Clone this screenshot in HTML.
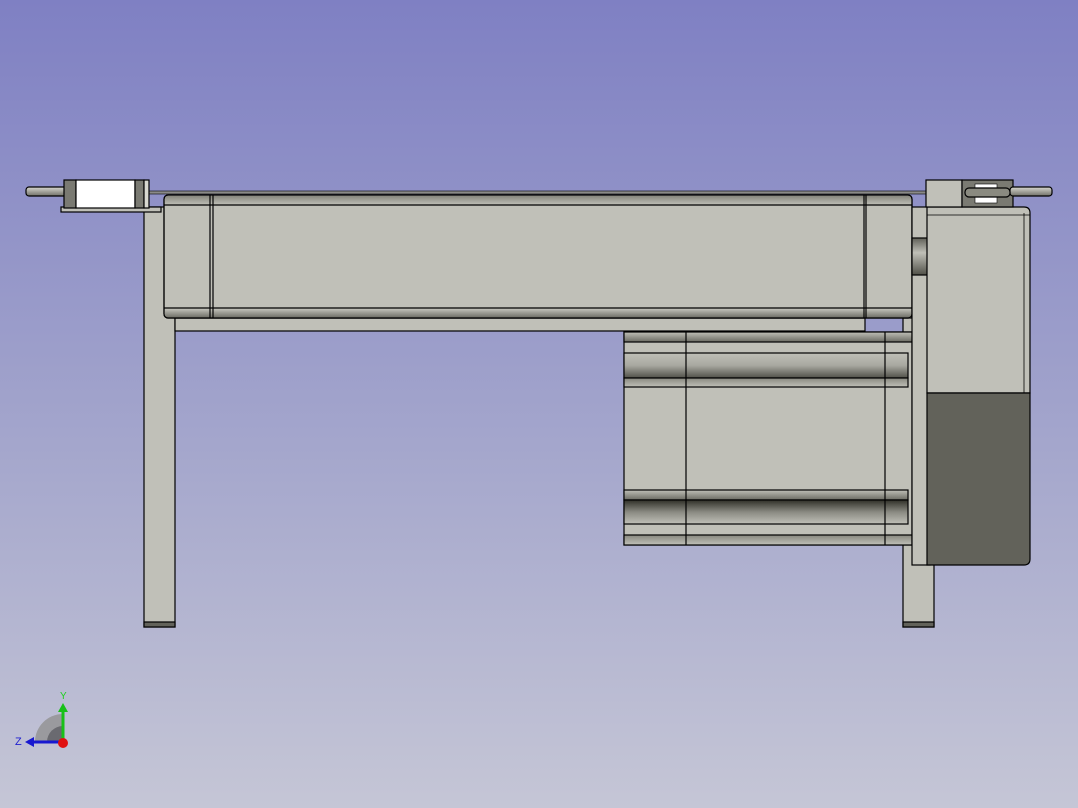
<!DOCTYPE html>
<html><head><meta charset="utf-8"><style>
html,body{margin:0;padding:0;width:1078px;height:808px;overflow:hidden}
body{background:linear-gradient(#7f80c3,#a4a6cc 55%,#c5c6d6);font-family:"Liberation Sans",sans-serif}
svg{position:absolute;left:0;top:0}
</style></head><body>
<svg width="1078" height="808" viewBox="0 0 1078 808">
<defs>
<linearGradient id="cyl" x1="0" y1="0" x2="0" y2="1"><stop offset="0" stop-color="#c0c0b8"/><stop offset=".5" stop-color="#a8a8a0"/><stop offset="1" stop-color="#505048"/></linearGradient>
<linearGradient id="cylr" x1="0" y1="0" x2="0" y2="1"><stop offset="0" stop-color="#303028"/><stop offset=".5" stop-color="#8a8a82"/><stop offset="1" stop-color="#c0c0b8"/></linearGradient>
<linearGradient id="topb" x1="0" y1="0" x2="0" y2="1"><stop offset="0" stop-color="#88887f"/><stop offset="1" stop-color="#c0c0b8"/></linearGradient>
<linearGradient id="botb" x1="0" y1="0" x2="0" y2="1"><stop offset="0" stop-color="#c0c0b8"/><stop offset="1" stop-color="#6a6a62"/></linearGradient>
<linearGradient id="rod" x1="0" y1="0" x2="0" y2="1"><stop offset="0" stop-color="#d8d8d0"/><stop offset="1" stop-color="#707068"/></linearGradient>
<linearGradient id="vcyl" x1="0" y1="0" x2="0" y2="1"><stop offset="0" stop-color="#606058"/><stop offset=".4" stop-color="#c0c0b8"/><stop offset="1" stop-color="#505048"/></linearGradient>
</defs>
<g stroke="#000" stroke-width="1.2">
<!-- legs -->
<rect x="144" y="207" width="31" height="420" fill="#c0c0b8"/>
<rect x="144" y="622" width="31" height="5" fill="#62625a"/>
<rect x="903" y="318" width="31" height="309" fill="#c0c0b8"/>
<rect x="903" y="622" width="31" height="5" fill="#62625a"/>
<!-- beam -->
<rect x="175" y="318" width="690" height="13" fill="#c0c0b8"/>
<!-- top rod -->
<rect x="140" y="191" width="800" height="3" fill="#8a8a88" stroke-width=".6"/>
<!-- left end block -->
<rect x="61" y="207" width="100" height="5" fill="#c0c0b8"/>
<rect x="26" y="187" width="46" height="9" rx="3" fill="url(#rod)"/>
<rect x="64" y="180" width="12" height="28" fill="#7a7a72"/>
<rect x="76" y="180" width="59" height="28" fill="#fff"/>
<rect x="135" y="180" width="9" height="28" fill="#7a7a72"/>
<rect x="144" y="180" width="5" height="28" fill="#d8d8d0"/>
<!-- main rail -->
<rect x="164" y="195" width="748" height="123" rx="4" fill="#c0c0b8"/>
<rect x="165" y="196" width="746" height="9" fill="url(#topb)" stroke="none"/>
<rect x="165" y="309" width="746" height="9" fill="url(#botb)" stroke="none"/>
<line x1="164" y1="205" x2="912" y2="205"/>
<line x1="164" y1="308" x2="912" y2="308"/>
<rect x="164" y="195" width="748" height="123" rx="4" fill="none"/>
<line x1="210" y1="195" x2="210" y2="318"/><line x1="213" y1="195" x2="213" y2="318"/>
<line x1="864" y1="195" x2="864" y2="318"/><line x1="866" y1="195" x2="866" y2="318"/>
<!-- lower motor -->
<rect x="624" y="332" width="288" height="213" fill="#c0c0b8"/>
<rect x="624" y="332" width="288" height="10" fill="url(#botb)"/>
<rect x="624" y="353" width="284" height="25" fill="url(#cyl)"/>
<rect x="624" y="378" width="284" height="9" fill="url(#topb)"/>
<rect x="624" y="490" width="284" height="10" fill="url(#botb)"/>
<rect x="624" y="500" width="284" height="24" fill="url(#cylr)"/>
<rect x="624" y="535" width="288" height="10" fill="url(#topb)"/>
<line x1="686" y1="332" x2="686" y2="545"/><line x1="885" y1="332" x2="885" y2="545"/>
<!-- right flange -->
<rect x="912" y="207" width="18" height="358" fill="#c0c0b8"/>
<rect x="912" y="238" width="16" height="37" fill="url(#vcyl)"/>
<!-- right motor box -->
<path d="M927 207 H1024 Q1030 207 1030 213 V393 H927 Z" fill="#c0c0b8"/>
<path d="M927 393 H1030 V559 Q1030 565 1024 565 H927 Z" fill="#62625a"/>
<line x1="1024" y1="213" x2="1024" y2="393" stroke-width=".8"/>
<line x1="927" y1="215" x2="1030" y2="215" stroke-width=".8"/>
<!-- right end block -->
<rect x="926" y="180" width="36" height="27" fill="#c0c0b8"/>
<rect x="962" y="180" width="51" height="27" fill="#7a7a72"/>
<rect x="975" y="184" width="22" height="19" fill="#fff" stroke-width=".6"/>
<rect x="1010" y="187" width="42" height="9" rx="3" fill="url(#rod)"/>
<rect x="965" y="188" width="45" height="9" rx="4" fill="#8a8a80"/>
</g>
<!-- axis indicator -->
<path d="M35 742 A28 28 0 0 1 63 714 V742 Z" fill="#9a9a9e"/>
<path d="M47 742 A16 16 0 0 1 63 726 V742 Z" fill="#6a6a70"/>
<line x1="63" y1="742" x2="63" y2="710" stroke="#18c018" stroke-width="3"/>
<polygon points="58,712 68,712 63,703" fill="#18c018"/>
<line x1="63" y1="742" x2="32" y2="742" stroke="#1818d0" stroke-width="3"/>
<polygon points="34,737 34,747 25,742" fill="#1818d0"/>
<circle cx="63" cy="743" r="5" fill="#e01010"/>
<text x="60" y="699" font-size="10" fill="#20d020" font-family="Liberation Sans">Y</text>
<text x="15" y="745" font-size="11" fill="#2020d0" font-family="Liberation Sans">Z</text>
</svg>
</body></html>
